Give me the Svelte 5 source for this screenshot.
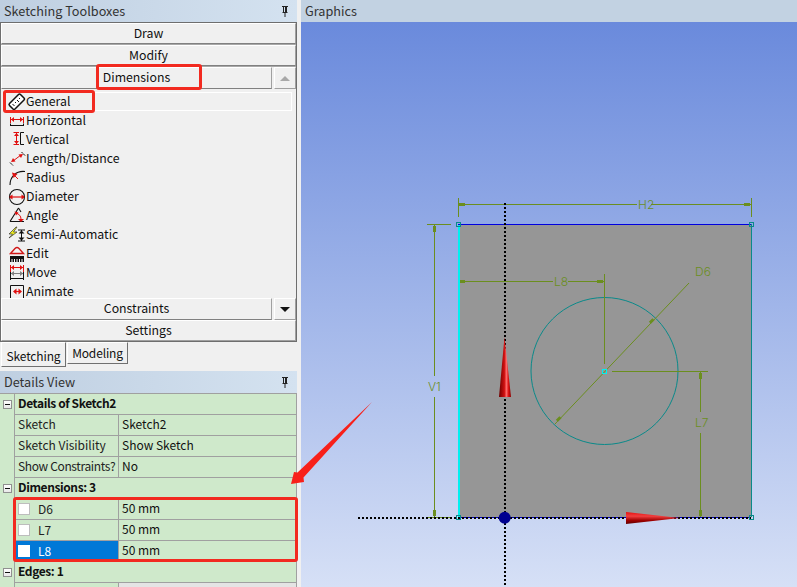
<script>
  const tools = [
    { id: 'general', label: 'General', active: true },
    { id: 'horizontal', label: 'Horizontal' },
    { id: 'vertical', label: 'Vertical' },
    { id: 'length', label: 'Length/Distance' },
    { id: 'radius', label: 'Radius' },
    { id: 'diameter', label: 'Diameter' },
    { id: 'angle', label: 'Angle' },
    { id: 'semi', label: 'Semi-Automatic' },
    { id: 'edit', label: 'Edit' },
    { id: 'move', label: 'Move' },
    { id: 'animate', label: 'Animate' }
  ];
  const sketchRows = [
    { k: 'Sketch', v: 'Sketch2' },
    { k: 'Sketch Visibility', v: 'Show Sketch' },
    { k: 'Show Constraints?', v: 'No', tight: true }
  ];
  const dims = [
    { name: 'D6', value: '50 mm' },
    { name: 'L7', value: '50 mm' },
    { name: 'L8', value: '50 mm', selected: true }
  ];
</script>

{#snippet pin()}
  <svg class="pin" width="10" height="12" viewBox="0 0 10 12">
    <path d="M2 1.500h6M2.500 7.500h5M5 8v4M3.500 1.500v6" fill="none" stroke="#222" stroke-width="1" />
    <rect x="5" y="1" width="2" height="6" fill="#222" />
  </svg>
{/snippet}

{#snippet toolIcon(id)}
  <svg class="ticon" width="20" height="19" viewBox="0 0 20 19" fill="none" stroke="#111" stroke-width="1">
    {#if id === 'general'}
      <path d="M2.500 11.500 11.500 2.500q1-1 2 0l3.500 3.500q1 1 0 2l-9 9q-1 1-2 0l-3.500-3.500q-1-1 0-2z" fill="#fff" stroke-width="1.500" />
      <path d="M5.500 12l2 2M8 10l1 1M10 8l2 2M12 6l1 1" />
    {:else if id === 'horizontal'}
      <path d="M3.500 6v6M16.500 6v6M3.500 8.500h13" stroke="#e01010" />
      <path d="M4 8.500l3-2.500v5zM16 8.500l-3-2.500v5z" fill="#e01010" stroke="none" />
      <path d="M3.500 12.500v2M3 14.500h14M16.500 12.500v2" />
    {:else if id === 'vertical'}
      <path d="M6.500 2.500H12M6.500 14.500H12M9.500 3v11" stroke="#e01010" />
      <path d="M9.500 3l-2.500 3h5zM9.500 14l-2.500-3h5z" fill="#e01010" stroke="none" />
      <path d="M17 2.500h-3.500v12H17" />
    {:else if id === 'length'}
      <path d="M6 12l8-6" stroke="#e01010" />
      <path d="M4 13l2-4 2.500 3.500zM16 5l-4.500 0.500 2.500 3.500z" fill="#e01010" stroke="none" />
      <path d="M3 13.500l3 3M14.500 3l4 4" stroke-dasharray="2 .5" />
    {:else if id === 'radius'}
      <path d="M3 17C3 9 9 2.500 18 3.500" stroke-width="1.100" />
      <path d="M11 11L7 7" stroke="#e01010" />
      <path d="M5 4.500l5.500 1.500-4 4z" fill="#e01010" stroke="none" />
    {:else if id === 'diameter'}
      <circle cx="10" cy="10" r="7.500" stroke-width="1.100" />
      <path d="M3 10h14" stroke="#e01010" stroke-width="1.200" />
      <path d="M2 10 5.500 7.500v5zM18 10 14.500 7.500v5z" fill="#e01010" stroke="none" />
    {:else if id === 'angle'}
      <path d="M3 15.500 11.500 2M3 15.500H17M11.500 2 14 6" stroke-width="1.100" />
      <path d="M9 7c3 1 5 3 5 6" stroke="#e01010" />
      <path d="M7.500 5.500l4 1-2.500 3zM14 16l-3-3h6z" fill="#e01010" stroke="none" />
    {:else if id === 'semi'}
      <path d="M9 2 2 9h3.500L2 13l8-6H6.500L10 2z" fill="#eded1e" stroke="#333" stroke-width=".7" />
      <path d="M11 5h7M11 16h7M14.500 5v11" />
      <path d="M14.500 5.500l-3 3h6zM14.500 15.500l-3-3h6z" fill="#111" stroke="none" />
    {:else if id === 'edit'}
      <path d="M3.500 9.500 8 4.500q2-2 4 0l4.500 5z" fill="#f4f4f4" stroke="#d01818" stroke-width="1.400" />
      <rect x="3" y="12" width="14" height="6" fill="#111" stroke="none" />
      <path d="M5 15v3M7.500 15v3M10 15v3M12.500 15v3M15 15v3" stroke="#fff" />
    {:else if id === 'move'}
      <path d="M3.500 2v7M16.500 2v7M3.500 4.500h13" stroke="#e01010" />
      <path d="M4 4.500l3-2.500v5zM16 4.500l-3-2.500v5z" fill="#e01010" stroke="none" />
      <path d="M4 10.500h12" stroke="#808080" />
      <path d="M4 10.500l3-2.500v5zM16 10.500l-3-2.500v5z" fill="#808080" stroke="none" />
      <path d="M3.500 9v8M16.500 9v8M3 15.500h14" />
    {:else if id === 'animate'}
      <path d="M3.500 19V3.500h13V19" />
      <path d="M7 9.500h7" stroke="#e01010" stroke-width="1.200" />
      <path d="M6 9.500l3.500-3v6zM15 9.500l-3.500-3v6z" fill="#e01010" stroke="none" />
    {/if}
  </svg>
{/snippet}

<div class="app">
  <aside class="left">
    <header class="title"><span>Sketching Toolboxes</span>{@render pin()}</header>

    <section class="toolbox">
      <button class="bar">Draw</button>
      <button class="bar">Modify</button>
      <div class="barrow">
        <button class="bar grow">Dimensions</button>
        <button class="arrow"><span class="tri up"></span></button>
      </div>
      <ul class="tools">
        {#each tools as t}
          <li class:active={t.active}>
            {@render toolIcon(t.id)}<span>{t.label}</span>
          </li>
        {/each}
      </ul>
      <div class="barrow">
        <button class="bar grow">Constraints</button>
        <button class="arrow dark"><span class="tri down"></span></button>
      </div>
      <button class="bar last">Settings</button>
    </section>

    <nav class="tabs">
      <button class="tab on">Sketching</button>
      <button class="tab">Modeling</button>
    </nav>

    <header class="title"><span>Details View</span>{@render pin()}</header>

    <section class="details">
      <div class="row head"><span class="gutter"><i class="minus"></i></span><b>Details of Sketch2</b></div>
      {#each sketchRows as r}
        <div class="row"><span class="gutter"></span><span class="k" class:tight={r.tight}>{r.k}</span><span class="v">{r.v}</span></div>
      {/each}
      <div class="row head"><span class="gutter"><i class="minus"></i></span><b>Dimensions: 3</b></div>
      {#each dims as d}
        <div class="row"><span class="gutter"></span><span class="k dim" class:sel={d.selected}><i class="check"></i><em>{d.name}</em></span><span class="v">{d.value}</span></div>
      {/each}
      <div class="row head"><span class="gutter"><i class="minus"></i></span><b>Edges: 1</b></div>
      <div class="row"><span class="gutter"></span><span class="k"></span><span class="v blank"></span></div>
    </section>
  </aside>

  <main class="graphics">
    <header class="title gtitle"><span>Graphics</span></header>
    <div class="canvas">
      <svg width="496" height="565" viewBox="301 22 496 565">
        <defs>
          <linearGradient id="coneV" x1="0" x2="1" y1="0" y2="0">
            <stop offset="0" stop-color="#6e0000" />
            <stop offset=".45" stop-color="#d01010" />
            <stop offset=".62" stop-color="#ff6a6a" />
            <stop offset=".8" stop-color="#d81010" />
            <stop offset="1" stop-color="#8a0000" />
          </linearGradient>
          <linearGradient id="coneH" x1="0" x2="0" y1="0" y2="1">
            <stop offset="0" stop-color="#e81010" />
            <stop offset=".35" stop-color="#f04040" />
            <stop offset=".7" stop-color="#a00000" />
            <stop offset="1" stop-color="#600000" />
          </linearGradient>
        </defs>

        <rect x="458" y="224" width="293.500" height="293.500" fill="#969696" />
        <circle cx="604.500" cy="371" r="73.500" fill="none" stroke="#0a8a8a" stroke-width="1" />

        <g stroke="#6b8e1e" fill="none" stroke-width="1">
          <path d="M458.500 198v19M751.500 198v19M458 204.500h179M651 204.500h100" />
          <path d="M427 224.500h24M427 517.500h25M434.500 225v151M434.500 397v120" />
          <path d="M458 281.500h95M568 281.500h36M604.500 274v90" />
          <path d="M689 283 555 424" />
          <path d="M612 371.500h96M700.500 372v40M700.500 433v84" />
        </g>
        <g fill="#6b8e1e">
          <rect x="459" y="203" width="6" height="3" /><rect x="744" y="203" width="6" height="3" />
          <rect x="433" y="226" width="3" height="6" /><rect x="433" y="510" width="3" height="6" />
          <rect x="459" y="280" width="6" height="3" /><rect x="597" y="280" width="6" height="3" />
          <rect x="699" y="373" width="3" height="6" /><rect x="699" y="510" width="3" height="6" />
          <rect x="649" y="320" width="5" height="3" transform="rotate(-45 651 321)" />
          <rect x="556" y="418" width="5" height="3" transform="rotate(-45 558 419)" />
        </g>
        <g class="dimtext" fill="#6b8e1e">
          <text x="638" y="209">H2</text>
          <text x="428" y="391">V1</text>
          <text x="554" y="286">L8</text>
          <text x="695" y="276">D6</text>
          <text x="695" y="427">L7</text>
        </g>

        <path d="M459 224v293" stroke="#00f0f0" stroke-width="2" fill="none" />
        <path d="M751.500 224v293" stroke="#0a8a8a" stroke-width="1" fill="none" />
        <path d="M458 224.500h293" stroke="#0000e0" stroke-width="1" fill="none" />
        <path d="M458 517.500h293" stroke="#0000c0" stroke-width="1" fill="none" />

        <path d="M358 518h393" stroke="#000" stroke-width="2" stroke-dasharray="2 2" fill="none" />
        <path d="M505 203v382" stroke="#000" stroke-width="2" stroke-dasharray="2 2" fill="none" />

        <g fill="none" stroke="#0a8a8a">
          <rect x="456.500" y="222.500" width="4" height="4" /><rect x="749.500" y="222.500" width="4" height="4" />
          <rect x="456.500" y="515.500" width="4" height="4" /><rect x="749.500" y="515.500" width="4" height="4" />
        </g>
        <rect x="602.500" y="369.500" width="4" height="4" fill="none" stroke="#00f0f0" />

        <path d="M504.500 337 511 397H499z" fill="url(#coneV)" />
        <path d="M626 512 680 518 626 524z" fill="url(#coneH)" />
        <circle cx="504.700" cy="517.700" r="6" fill="#000090" />
      </svg>
    </div>
  </main>

  <div class="mark m-dim"></div>
  <div class="mark m-gen"></div>
  <div class="mark m-tab"></div>
  <svg class="pointer" width="90" height="90" viewBox="0 0 90 90">
    <path d="M84 2 15.500 77.500 16 82 3 84 6 72 9.500 72.500z" fill="#f8201a" />
  </svg>
</div>

<style>
  :global(html), :global(body) {
    margin: 0;
    overflow: hidden;
    background: #f0f0f0;
  }
  .app {
    position: relative;
    display: flex;
    width: 797px;
    height: 587px;
    overflow: hidden;
    font-family: "Noto Sans CJK SC", "Noto Sans", sans-serif;
    font-size: 12px;
    color: #111;
  }
  .left {
    width: 297px;
    flex: none;
    display: flex;
    flex-direction: column;
    background: #f0f0f0;
  }
  .title {
    height: 22px;
    flex: none;
    display: flex;
    align-items: center;
    justify-content: space-between;
    padding: 0 7px 1px 4px;
    background: linear-gradient(90deg, #bfcfe1, #d4e2f0);
    color: #333;
    font-size: 12.700px;
    box-sizing: border-box;
  }
  .pin { display: block; }
  .toolbox {
    height: 320px;
    flex: none;
    box-sizing: border-box;
    border: 1px solid #6e6e6e;
    display: flex;
    flex-direction: column;
    background: #f0f0f0;
  }
  button {
    font: inherit;
    color: inherit;
    padding: 0;
    margin: 0;
    background: #f0f0f0;
  }
  .bar {
    height: 21px;
    flex: none;
    border: 1px solid #fff;
    border-right-color: #a0a0a0;
    border-bottom-color: #808080;
    box-shadow: 0 1px 0 #a8a8a8;
    margin-bottom: 1px;
    display: block;
    padding-bottom: 2px;
    font-size: 12.300px;
  }
  .barrow {
    display: flex;
    height: 22px;
    flex: none;
    gap: 2px;
  }
  .grow {
    flex: 1;
    margin: 0;
    height: 22px;
    box-shadow: none;
  }
  .arrow {
    width: 22px;
    flex: none;
    border: 1px solid #fff;
    border-bottom-color: #a0a0a0;
    border-right-color: #a0a0a0;
    display: flex;
    align-items: center;
    justify-content: center;
  }
  .tri {
    width: 0;
    height: 0;
    border-left: 5px solid transparent;
    border-right: 5px solid transparent;
  }
  .tri.up { border-bottom: 5px solid #a8a8a8; }
  .tri.down { border-top: 5px solid #111; }
  .tools {
    list-style: none;
    margin: 0 4px 0 0;
    padding: 3px 0 0 4px;
    flex: 1;
    min-height: 0;
    overflow: hidden;
  }
  .tools li {
    height: 19px;
    display: flex;
    align-items: center;
    white-space: nowrap;
    font-size: 12.300px;
  }
  .tools li span { padding-bottom: 2px; }
  .tools li.active {
    box-shadow: inset 0 0 0 1px #fff;
  }
  .ticon {
    flex: none;
    margin: 0 -1px 0 2px;
  }
  .last {
    margin: 0;
    box-shadow: none;
    border-bottom-color: #a0a0a0;
  }
  .tabs {
    height: 29px;
    flex: none;
    display: flex;
    align-items: flex-start;
    background: #f0f0f0;
    padding-left: 1px;
  }
  .tab {
    width: 61px;
    height: 22px;
    margin-left: 1px;
    border: 1px solid #fff;
    border-right-color: #707070;
    border-bottom-color: #707070;
    padding-bottom: 2px;
    letter-spacing: -.15px;
  }
  .tab.on {
    width: 65px;
    height: 25px;
    margin-left: 0;
    padding-bottom: 0;
    padding-top: 1px;
  }
  .details {
    flex: 1;
    background: #cfe9cb;
    border-top: 1px solid #a0a0a0;
    border-right: 1px solid #a0a0a0;
    overflow: hidden;
  }
  .row {
    display: flex;
    height: 21px;
    box-sizing: border-box;
    line-height: 18px;
  }
  .gutter {
    width: 14px;
    flex: none;
    border-right: 1px solid #a0a0a0;
    display: flex;
    align-items: center;
    justify-content: center;
  }
  .row b {
    flex: 1;
    padding-left: 3px;
    border-bottom: 1px solid #a0a0a0;
    font-weight: 700;
    letter-spacing: -.4px;
  }
  .k {
    width: 104px;
    flex: none;
    padding-left: 3px;
    box-sizing: border-box;
    border-right: 1px solid #a0a0a0;
    border-bottom: 1px solid #a0a0a0;
    white-space: nowrap;
    color: #222;
  }
  .k.tight { letter-spacing: -.36px; }
  .v {
    flex: 1;
    padding-left: 3px;
    border-bottom: 1px solid #a0a0a0;
  }
  .v.blank {
    background: #e4e4e4;
  }
  .minus {
    display: block;
    width: 9px;
    height: 9px;
    box-sizing: border-box;
    border: 1px solid #909090;
    background: linear-gradient(#fff, #e8e8e8);
    position: relative;
  }
  .minus::after {
    content: "";
    position: absolute;
    left: 1px;
    right: 1px;
    top: 3px;
    height: 1px;
    background: #111;
  }
  .dim {
    display: flex;
    align-items: center;
    padding-left: 3px;
  }
  .dim em {
    font-style: normal;
    margin-left: 8px;
    padding-bottom: 1px;
  }
  .dim.sel {
    background: #0078d7;
    color: #fff;
  }
  .check {
    width: 12px;
    height: 12px;
    box-sizing: border-box;
    background: #fff;
    border: 1px solid #bdbdbd;
    display: block;
  }
  .dim.sel .check { border-color: #fff; }

  .graphics {
    flex: 1;
    margin-left: 4px;
    display: flex;
    flex-direction: column;
    min-width: 0;
  }
  .gtitle { background: #c2d2e2; }
  .canvas {
    flex: 1;
    background: linear-gradient(#6a8adc, #d6e0f6);
    overflow: hidden;
  }
  .canvas svg { display: block; }
  .dimtext text {
    font-family: "Inter", "Liberation Sans", sans-serif;
    font-size: 12px;
    font-weight: 300;
  }

  .mark {
    position: absolute;
    border: 3px solid #f22a20;
    border-radius: 3px;
    box-sizing: border-box;
    pointer-events: none;
  }
  .m-dim { left: 96px; top: 64px; width: 106px; height: 26px; }
  .m-gen { left: 3px; top: 90px; width: 92px; height: 23px; }
  .m-tab { left: 13px; top: 497px; width: 285px; height: 65px; }
  .pointer { position: absolute; left: 288px; top: 400px; }
</style>
